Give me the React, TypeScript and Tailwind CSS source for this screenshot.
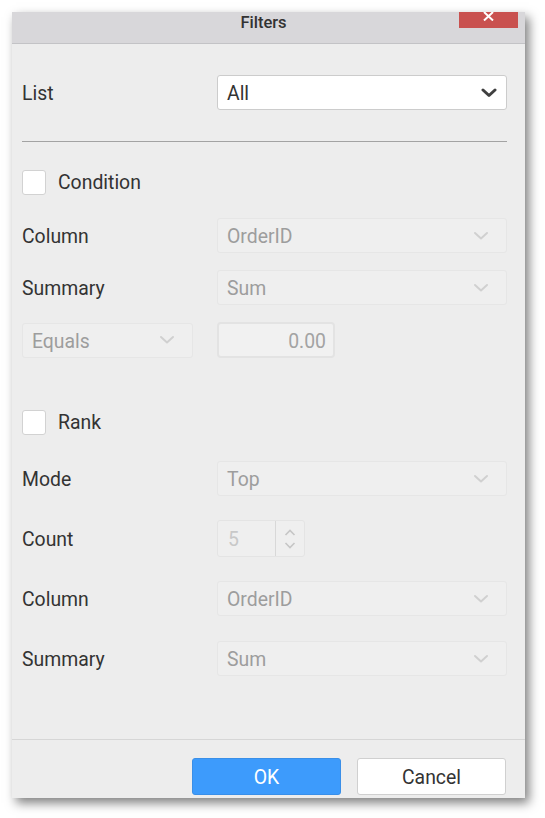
import React from 'react'

const Chevron = ({ dark }: { dark?: boolean }) => (
  <svg width={16} height={10} viewBox="0 0 16 10" fill="none">
    <path
      d="M2 2l6 5.5L14 2"
      stroke={dark ? '#3f3f3f' : '#d0d0d0'}
      strokeWidth={dark ? 3 : 2}
      strokeLinecap="round"
      strokeLinejoin="round"
    />
  </svg>
)

const Select = ({ value, disabled, className }: { value: string; disabled?: boolean; className?: string }) => (
  <div
    className={`h-[35px] flex items-center justify-between pl-[9px] pr-[9px] rounded-[3px] border ${
      disabled ? 'bg-[#efefef] border-[#e6e6e6] text-[#9d9d9d]' : 'bg-white border-[#cccccc] text-[#333]'
    } ${className ?? 'w-[290px]'}`}
  >
    <span className="pt-[3px]">{value}</span>
    <span className={disabled ? 'mr-[8px]' : ''}>
      <Chevron dark={!disabled} />
    </span>
  </div>
)

const Row = ({ label, children, className }: { label: string; children: React.ReactNode; className?: string }) => (
  <div className={`flex items-center ${className ?? ''}`}>
    <span className="w-[195px] pt-[3px] text-[#333]">{label}</span>
    {children}
  </div>
)

const Checkbox = ({ label, className }: { label: string; className?: string }) => (
  <div className={`h-[25px] flex items-center gap-[12px] ${className ?? ''}`}>
    <div className="w-[24px] h-[25px] bg-white border border-[#d2d2d2] rounded-[3px]" />
    <span className="text-[#333] leading-none">{label}</span>
  </div>
)

export default function App() {
  return (
    <div className="min-h-[818px] bg-white pt-[12px] pl-[12px]" style={{ fontFamily: 'Roboto, "Liberation Sans", sans-serif' }}>
      <div className="w-[513px] h-[786px] flex flex-col bg-[#ededed] shadow-[4px_5px_10px_rgba(0,0,0,0.5)] text-[19.4px] relative">
        <div className="h-[32px] shrink-0 bg-[#d8d7da] border-b border-[#c3c3c6] flex items-start justify-center pt-[3px] pr-[10px]">
          <span className="text-[16.5px] leading-[16px] font-medium text-[#333]">Filters</span>
        </div>
        <div className="absolute top-0 right-[7px] w-[59px] h-[16px] bg-[#c9514f] flex justify-center">
          <svg width={11} height={9} viewBox="0 0 11 9">
            <path d="M1 0l9 8.5M10 0L1 8.5" stroke="#fff" strokeWidth={2} />
          </svg>
        </div>

        <div className="flex-1 px-[10px] pt-[31px]">
          <Row label="List">
            <Select value="All" />
          </Row>
          <div className="mt-[31px] w-[485px] h-px bg-[#a3a3a3]" />
          <Checkbox label="Condition" className="mt-[28px]" />
          <Row label="Column" className="mt-[23px]">
            <Select value="OrderID" disabled />
          </Row>
          <Row label="Summary" className="mt-[17px]">
            <Select value="Sum" disabled />
          </Row>
          <div className="mt-[17px] flex items-center gap-[24px]">
            <Select value="Equals" disabled className="w-[171px]" />
            <div className="w-[118px] h-[36px] flex items-center justify-end pt-[3px] pr-[7px] bg-[#f1f1f1] border-2 border-[#e3e3e3] rounded-[4px] text-[#a3a3a3]">
              0.00
            </div>
          </div>
          <Checkbox label="Rank" className="mt-[52px]" />
          <Row label="Mode" className="mt-[26px]">
            <Select value="Top" disabled />
          </Row>
          <Row label="Count" className="mt-[24px]">
            <div className="w-[88px] h-[37px] flex bg-[#efefef] border border-[#e4e4e4] rounded-[3px]">
              <span className="w-[58px] flex items-center pt-[3px] pl-[10px] text-[#c8c8c8] border-r border-[#d8d8d8]">5</span>
              <div className="flex-1 flex flex-col items-center justify-center gap-[6px]">
                <svg width={12} height={7} viewBox="0 0 12 7" fill="none">
                  <path d="M1.5 6L6 1.5 10.5 6" stroke="#c6c6c6" strokeWidth={1.6} />
                </svg>
                <svg width={12} height={7} viewBox="0 0 12 7" fill="none">
                  <path d="M1.5 1L6 5.5 10.5 1" stroke="#c6c6c6" strokeWidth={1.6} />
                </svg>
              </div>
            </div>
          </Row>
          <Row label="Column" className="mt-[24px]">
            <Select value="OrderID" disabled />
          </Row>
          <Row label="Summary" className="mt-[25px]">
            <Select value="Sum" disabled />
          </Row>
        </div>

        <div className="h-[59px] shrink-0 border-t border-[#d6d6d6] flex justify-end items-start gap-[16px] pt-[18px] pr-[19px]">
          <button className="w-[149px] h-[37px] pt-[3px] bg-[#3d9bfc] border border-[#3a8fe8] rounded-[3px] text-white">OK</button>
          <button className="w-[149px] h-[37px] pt-[3px] bg-white border border-[#d0d0d0] rounded-[3px] text-[#333]">Cancel</button>
        </div>
      </div>
    </div>
  )
}
